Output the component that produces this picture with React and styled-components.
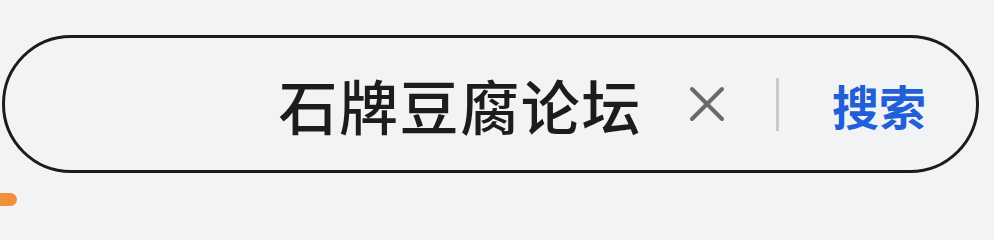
import React from "react";
import styled, { createGlobalStyle } from "styled-components";

const Global = createGlobalStyle`
  html, body { margin: 0; padding: 0; background: #f2f3f5; }
  body { font-family: "Noto Sans CJK SC", "Noto Sans", sans-serif; }
`;

const Page = styled.div`
  position: relative;
  width: 994px;
  height: 228px;
  padding: 35px 0 0 2px;
  box-sizing: border-box;
  background: #f2f3f5;
  overflow: hidden;
`;

const SearchBar = styled.div`
  box-sizing: border-box;
  width: 977px;
  height: 138px;
  border: 3px solid #1b1b1b;
  border-radius: 69px;
  display: flex;
  align-items: center;
  justify-content: flex-end;
  padding-right: 50px;
`;

const Query = styled.span`
  font-size: 59px;
  line-height: 1;
  color: #1c1c1c;
  letter-spacing: 1.6px;
  font-weight: 500;
`;

const ClearButton = styled.button`
  border: none;
  background: transparent;
  padding: 0;
  margin-left: 45px;
  width: 40px;
  height: 40px;
  display: flex;
  align-items: center;
  justify-content: center;
  cursor: pointer;
`;

const Divider = styled.div`
  width: 3px;
  height: 53px;
  background: #c9c9c9;
  margin-left: 49px;
`;

const SearchButton = styled.button`
  border: none;
  background: transparent;
  padding: 0;
  margin-left: 53px;
  font-family: "Noto Sans CJK SC", sans-serif;
  font-size: 47px;
  line-height: 1;
  font-weight: 700;
  color: #1f5fd8;
  cursor: pointer;
`;

const Blob = styled.div`
  position: absolute;
  left: -6px;
  top: 193px;
  width: 23px;
  height: 13px;
  border-radius: 7px;
  background: #f0903a;
`;

export default function App() {
  return (
    <>
      <Global />
      <Page>
        <SearchBar>
          <Query>石牌豆腐论坛</Query>
          <ClearButton aria-label="清除">
            <svg width="36" height="36" viewBox="0 0 36 36">
              <path d="M3 3 L33 33 M33 3 L3 33" stroke="#6a6a6a" strokeWidth="4" strokeLinecap="round" />
            </svg>
          </ClearButton>
          <Divider />
          <SearchButton>搜索</SearchButton>
        </SearchBar>
        <Blob />
      </Page>
    </>
  );
}
